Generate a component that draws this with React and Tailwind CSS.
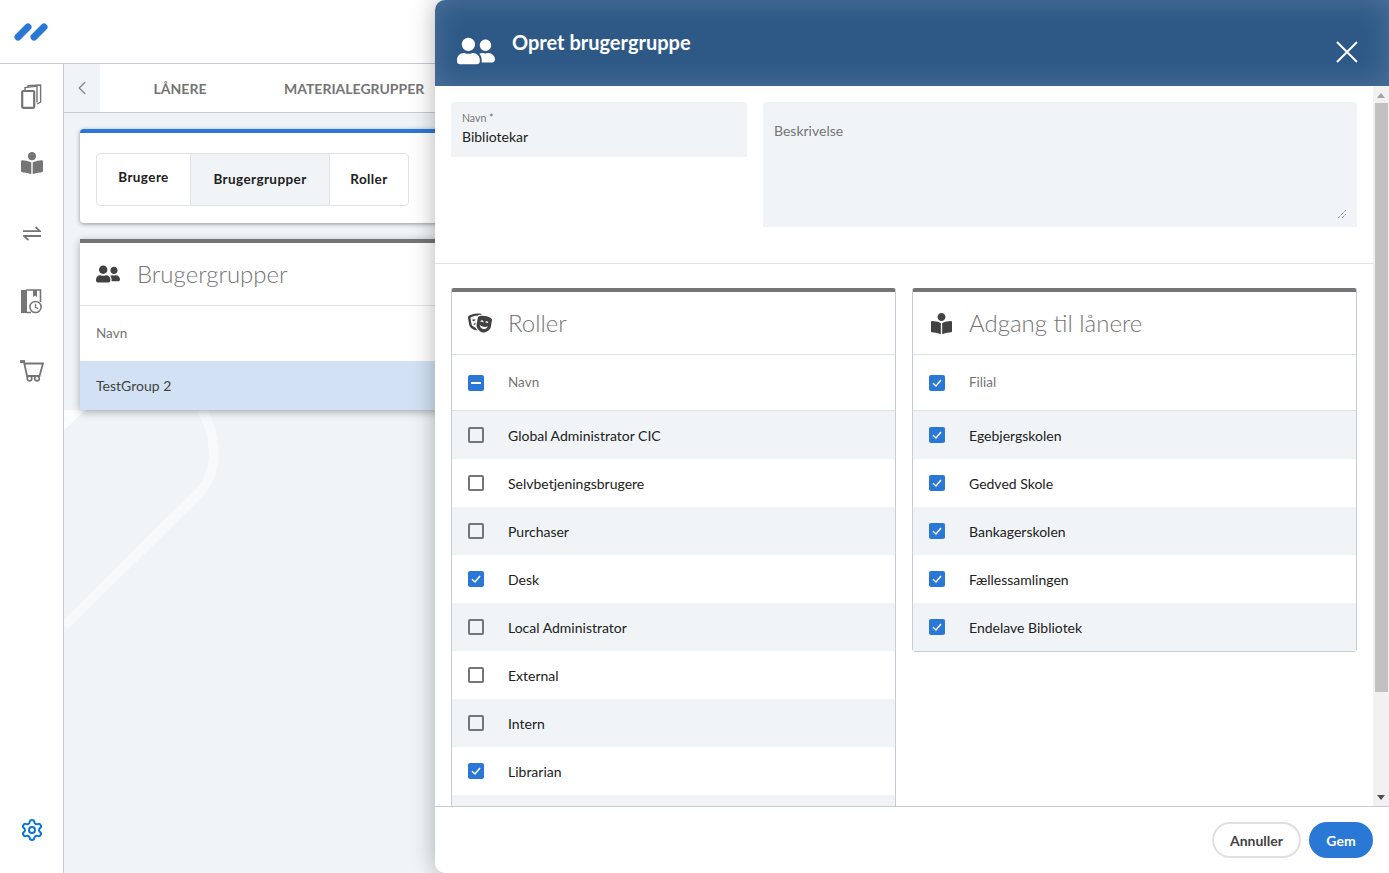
import React from 'react';
import { ChevronLeft, Settings } from 'lucide-react';
import { FaBookReader, FaTheaterMasks, FaUserFriends } from 'react-icons/fa';

const roles = [
    { name: 'Global Administrator CIC', checked: false },
    { name: 'Selvbetjeningsbrugere', checked: false },
    { name: 'Purchaser', checked: false },
    { name: 'Desk', checked: true },
    { name: 'Local Administrator', checked: false },
    { name: 'External', checked: false },
    { name: 'Intern', checked: false },
    { name: 'Librarian', checked: true },
    { name: '', checked: false },
];

const branches = [
    { name: 'Egebjergskolen', checked: true },
    { name: 'Gedved Skole', checked: true },
    { name: 'Bankagerskolen', checked: true },
    { name: 'Fællessamlingen', checked: true },
    { name: 'Endelave Bibliotek', checked: true },
];

const Logo = () => (
    <svg width="34" height="18" viewBox="0 0 34 18" fill="none" stroke="#2a78d6" strokeWidth="7" strokeLinecap="round">
        <line x1="4" y1="14" x2="14" y2="4" />
        <line x1="20" y1="14" x2="30" y2="4" />
    </svg>
);

const BooksIcon = () => (
    <svg width="21" height="25" viewBox="0 0 21 25" fill="none" stroke="#757575">
        <rect x="1.2" y="7" width="12" height="16.8" rx="1" strokeWidth="2.2" fill="#fff" />
        <path d="M4 6V3.5L16 2V18.5" strokeWidth="1.4" />
        <path d="M7 3.5V1.6L19.6 1V18L16 20" strokeWidth="1.4" />
    </svg>
);

const TransferIcon = () => (
    <svg width="18" height="15" viewBox="0 0 18 15" fill="none" stroke="#757575" strokeWidth="1.8">
        <path d="M0 5.2H17L12.5 1" />
        <path d="M18 10H1L5.5 14.2" />
    </svg>
);

const BookClockIcon = () => (
    <svg width="21" height="25" viewBox="0 0 21 25" fill="none">
        <path d="M0 1H6V24H0Z" fill="#757575" />
        <path d="M5 1H19.5V13M5 23.5H10" stroke="#757575" strokeWidth="1.6" />
        <path d="M12 1H16V8L14 6.5L12 8Z" fill="#757575" />
        <circle cx="14.5" cy="18" r="5.6" fill="#fff" stroke="#757575" strokeWidth="1.5" />
        <path d="M14.5 14.8V18.3L17 19.6" stroke="#757575" strokeWidth="1.3" />
    </svg>
);

const CartIcon = () => (
    <svg width="24" height="22" viewBox="0 0 24 22" fill="none" stroke="#757575">
        <path d="M0 1.6H5" strokeWidth="3" />
        <path d="M4 2L7 16H19.5L23 3.5H5" strokeWidth="1.8" />
        <circle cx="9.5" cy="18.5" r="2.3" strokeWidth="1.7" />
        <circle cx="17" cy="18.5" r="2.3" strokeWidth="1.7" />
    </svg>
);

const CloseIcon = () => (
    <svg width="22" height="22" viewBox="0 0 22 22" fill="none" stroke="#fff" strokeWidth="2">
        <path d="M1 1L21 21M21 1L1 21" />
    </svg>
);

const Checkbox = ({ checked, partial }) => {
    if (partial) {
        return (
            <span className="flex size-4 shrink-0 items-center justify-center rounded-[2px] bg-[#2a78d6]">
                <span className="h-[2px] w-[10px] bg-white"></span>
            </span>
        );
    }
    if (checked) {
        return (
            <span className="flex size-4 shrink-0 items-center justify-center rounded-[2px] bg-[#2a78d6]">
                <svg width="12" height="12" viewBox="0 0 12 12" fill="none" stroke="#fff" strokeWidth="1.5">
                    <path d="M2 6.2L5 9L10 3" />
                </svg>
            </span>
        );
    }
    return <span className="size-4 shrink-0 rounded-[2px] border-2 border-[#757575]"></span>;
};

const NavItem = ({ className, children }) => (
    <div className={`flex w-full justify-center ${className}`}>{children}</div>
);

const ListCard = ({ icon, title, column, headerCheck, rows, className }) => (
    <div className={`flex-1 self-start rounded-b-[4px] rounded-t-[3px] border-x border-b border-t-4 border-x-[#c5ccd6] border-b-[#c5ccd6] border-t-[#757575] bg-white ${className}`}>
        <div className="flex h-[63px] items-center border-b border-[#dfe3e7]">
            <div className="flex w-[56px] justify-center text-[#424242]">{icon}</div>
            <div className="text-[24px] leading-8 font-light text-[#757575]">{title}</div>
        </div>
        <div className="flex h-[56px] items-center border-b border-[#dfe3e7] pl-4">
            {headerCheck}
            <div className="ml-6 text-[13.5px] text-[#757575]">{column}</div>
        </div>
        {rows.map((row, index) => (
            <div key={index} className={`flex h-12 items-center pl-4 ${index % 2 === 0 ? 'bg-[#f0f4f7]' : 'bg-white'}`}>
                <Checkbox checked={row.checked} />
                <div className="ml-6 text-[14px] text-[#212121]">{row.name}</div>
            </div>
        ))}
    </div>
);

const Dialog = () => (
    <div className="absolute top-0 right-0 bottom-0 flex w-[954px] flex-col overflow-hidden rounded-l-[10px] bg-white shadow-[0_0_24px_rgba(0,0,0,0.3)]">
        <div className="flex h-[86px] shrink-0 bg-[#2e5987] pr-[31px] pl-[22px] shadow-[inset_0_0_28px_rgba(255,255,255,0.16)]">
            <FaUserFriends className="mt-[32px] text-white" size={38} />
            <div className="mt-[28px] ml-[17px] flex-1 text-[20px] leading-7 font-bold text-white">Opret brugergruppe</div>
            <div className="mt-[41px]">
                <CloseIcon />
            </div>
        </div>
        <div className="flex min-h-0 flex-1">
            <div className="min-w-0 flex-1 overflow-hidden">
                <div className="flex h-[178px] gap-4 border-b border-[#dfe3e7] px-4 pt-4">
                    <div className="h-[55px] w-[296px] rounded-t-[4px] bg-[#f0f4f7] px-[11px] pt-[10px]">
                        <div className="text-[10.5px] leading-[13px] text-[#757575]">Navn *</div>
                        <div className="mt-[2px] text-[14px] leading-[20px] text-[#212121]">Bibliotekar</div>
                    </div>
                    <div className="relative h-[125px] flex-1 rounded-t-[4px] bg-[#f0f4f7] px-[11px] pt-[20px]">
                        <div className="text-[14px] leading-[18px] text-[#757575]">Beskrivelse</div>
                        <svg className="absolute right-[10px] bottom-[8px]" width="10" height="10" viewBox="0 0 10 10" stroke="#555" strokeDasharray="1 1">
                            <path d="M1 9L9 1M5 9L9 5" />
                        </svg>
                    </div>
                </div>
                <div className="flex gap-4 px-4 pt-6">
                    <ListCard
                        icon={<FaTheaterMasks size={24} />}
                        title="Roller"
                        column="Navn"
                        headerCheck={<Checkbox partial />}
                        rows={roles}
                    />
                    <ListCard
                        icon={<FaBookReader size={21} />}
                        title="Adgang til lånere"
                        column="Filial"
                        headerCheck={<Checkbox checked />}
                        rows={branches}
                    />
                </div>
            </div>
            <div className="flex w-4 shrink-0 flex-col items-center bg-[#f1f1f1]">
                <div className="flex h-[17px] items-center justify-center">
                    <span className="mt-[2px] border-x-4 border-b-[5px] border-x-transparent border-b-[#a3a3a3]"></span>
                </div>
                <div className="h-[589px] w-[13px] bg-[#c1c1c1]"></div>
                <div className="flex flex-1 items-end justify-center pb-[6px]">
                    <span className="border-x-4 border-t-[5px] border-x-transparent border-t-[#505050]"></span>
                </div>
            </div>
        </div>
        <div className="flex h-[67px] shrink-0 items-start justify-end gap-2 border-t border-[#c5ccd6] pt-[15px] pr-4">
            <button className="h-9 w-[89px] rounded-full border-2 border-[#e0e0e0] bg-white text-[14px] font-bold text-[#424242]">Annuller</button>
            <button className="h-9 w-[64px] rounded-full bg-[#2a78d6] text-[14px] font-bold text-white">Gem</button>
        </div>
    </div>
);

const App = () => {
    return (
        <div className="relative flex h-screen flex-col overflow-hidden bg-white font-['Lato',sans-serif]">
            <div className="flex h-16 shrink-0 items-center border-b border-[#c5ccd6] pl-[14px]">
                <Logo />
            </div>
            <div className="flex min-h-0 flex-1">
                <div className="flex w-16 shrink-0 flex-col border-r border-[#c5ccd6] bg-white pt-5">
                    <NavItem className="h-[25px]"><BooksIcon /></NavItem>
                    <NavItem className="mt-[43px] h-[26px]"><FaBookReader className="text-[#757575]" size={22} /></NavItem>
                    <NavItem className="mt-[48px] h-[15px]"><TransferIcon /></NavItem>
                    <NavItem className="mt-[48px] h-[25px]"><BookClockIcon /></NavItem>
                    <NavItem className="mt-[46px] h-[22px]"><CartIcon /></NavItem>
                    <NavItem className="mt-auto mb-[31px]"><Settings className="text-[#0a76d8]" size={24} strokeWidth={2} /></NavItem>
                </div>
                <div className="relative min-w-0 flex-1 bg-[#f0f4f7]">
                    <svg className="absolute top-0 left-0" width="400" height="809" viewBox="0 0 400 809" fill="none">
                        <path d="M0 366L22 346H0Z" fill="#fff" opacity="0.7" />
                        <path d="M0 562L132 432C146 418 152 400 149 380C148 368 144 356 138 346" stroke="#fff" strokeWidth="10" opacity="0.45" />
                    </svg>
                    <div className="relative flex h-[49px] border-b border-[#c5ccd6] bg-white">
                        <div className="flex w-9 items-center justify-center bg-[#f0f4f7] text-[#8a8a8a]">
                            <ChevronLeft size={22} strokeWidth={1.6} />
                        </div>
                        <div className="flex w-40 items-center justify-center text-[14px] font-bold text-[#757575]">LÅNERE</div>
                        <div className="flex items-center px-6 text-[14px] font-bold text-[#757575]">MATERIALEGRUPPER</div>
                    </div>
                    <div className="relative flex flex-col gap-4 px-4 pt-4">
                        <div className="h-[94px] rounded-t-[4px] rounded-b-[4px] border-t-4 border-[#2a78d6] bg-white px-4 pt-5 shadow-[0_1px_4px_rgba(0,0,0,0.4)]">
                            <div className="flex h-[53px] w-[313px] rounded-[4px] border border-[#dfe3e7] text-[13.5px] font-bold tracking-[0.4px] text-[#212121]">
                                <div className="flex w-[94px] items-center justify-center border-r border-[#dfe3e7] pb-1">Brugere</div>
                                <div className="flex w-[139px] items-center justify-center border-r border-[#dfe3e7] bg-[#f0f4f7]">Brugergrupper</div>
                                <div className="flex flex-1 items-center justify-center">Roller</div>
                            </div>
                        </div>
                        <div className="border-t-4 border-[#757575] bg-white shadow-[0_2px_8px_rgba(0,0,0,0.3)]">
                            <div className="flex h-[63px] items-center border-b border-[#dfe3e7] pl-4">
                                <FaUserFriends className="text-[#424242]" size={24} />
                                <div className="ml-[17px] text-[24px] font-light text-[#757575]">Brugergrupper</div>
                            </div>
                            <div className="flex h-[55px] items-center pl-4 text-[13.5px] text-[#757575]">Navn</div>
                            <div className="flex h-[49px] items-center bg-[#d2e2f4] pl-4 text-[14px] text-[#424242]">TestGroup 2</div>
                        </div>
                    </div>
                </div>
            </div>
            <Dialog />
        </div>
    );
};

export default App;
